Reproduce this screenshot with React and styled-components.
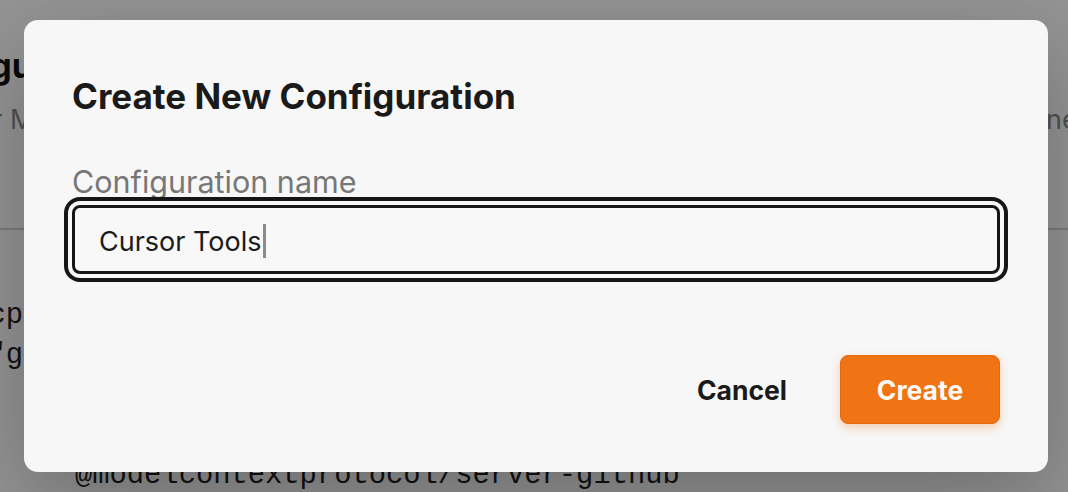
import React from "react";
import styled, { createGlobalStyle } from "styled-components";

const GlobalStyle = createGlobalStyle`
  html, body {
    margin: 0;
    padding: 0;
    width: 1068px;
    height: 492px;
    overflow: hidden;
    font-family: Inter, "Noto Sans", sans-serif;
  }
`;

const Page = styled.div`
  position: relative;
  width: 1068px;
  height: 492px;
  overflow: hidden;
  background: #ffffff;
`;

const PageBody = styled.div`
  margin-left: -100px;
  padding-top: 46px;
  width: 1300px;
`;

const PageTitle = styled.h1`
  margin: 0;
  font-size: 34px;
  line-height: 40px;
  font-weight: 700;
  color: #111;
`;

const PageSubtitle = styled.p`
  margin: 17px 0 0 16px;
  font-size: 27px;
  line-height: 34px;
  color: #8a8a8a;
  white-space: nowrap;
`;

const Divider = styled.hr`
  margin: 91px 0 0;
  border: 0;
  border-top: 2px solid #d6d6d6;
`;

const Code = styled.pre`
  margin: 66px 0 0 54px;
  font-family: "Liberation Mono", "DejaVu Sans Mono", monospace;
  font-size: 28.8px;
  line-height: 40px;
  color: #1e1e1e;
`;

const Overlay = styled.div`
  position: absolute;
  inset: 0;
  display: flex;
  align-items: center;
  justify-content: center;
  padding-left: 4px;
  background: rgba(0, 0, 0, 0.42);
`;

const Dialog = styled.div`
  width: 1024px;
  box-sizing: border-box;
  padding: 56px 48px 48px;
  background: #f7f7f7;
  border-radius: 14px;
  box-shadow: 0 30px 90px rgba(0, 0, 0, 0.25);
`;

const DialogTitle = styled.h2`
  margin: 0;
  font-size: 35px;
  line-height: 40px;
  font-weight: 700;
  color: #1a1a1a;
`;

const Field = styled.div`
  margin-top: 50px;
  display: flex;
  flex-direction: column;
  gap: 7px;
`;

const Label = styled.label`
  font-size: 30.5px;
  line-height: 32px;
  color: #777777;
`;

const Input = styled.div`
  height: 69px;
  box-sizing: border-box;
  display: flex;
  align-items: center;
  padding: 3px 24px 0;
  border: 3px solid #161616;
  border-radius: 8px;
  background: #f8f8f8;
  box-shadow: 0 0 0 4px #f7f7f7, 0 0 0 8px #161616;
  font-size: 27px;
  color: #1b1b1b;
`;

const Caret = styled.span`
  display: inline-block;
  width: 3px;
  height: 34px;
  margin-left: 1px;
  background: #8c8c8c;
`;

const Footer = styled.div`
  margin-top: 81px;
  display: flex;
  justify-content: flex-end;
  align-items: center;
  gap: 28px;
`;

const Button = styled.button`
  height: 69px;
  box-sizing: border-box;
  padding: 0 ${(p) => (p.$primary ? "35px" : "24px")};
  min-width: ${(p) => (p.$primary ? "160px" : "auto")};
  border-radius: 8px;
  border: 1px solid ${(p) => (p.$primary ? "#e26a10" : "transparent")};
  background: ${(p) => (p.$primary ? "#f07314" : "transparent")};
  color: ${(p) => (p.$primary ? "#fffaf5" : "#1a1a1a")};
  box-shadow: ${(p) =>
    p.$primary ? "0 4px 10px rgba(240, 115, 20, 0.3)" : "none"};
  font-family: Inter, "Noto Sans", sans-serif;
  font-size: 26.5px;
  font-weight: 700;
  cursor: pointer;
`;

export default function App() {
  return (
    <>
      <GlobalStyle />
      <Page>
        <PageBody>
          <PageTitle>Configurations</PageTitle>
          <PageSubtitle>
            Cursor MCP servers, grouped into named configurations you can switch between from one place with ease com
          </PageSubtitle>
          <Divider />
          <Code>{`"mcpServers": {
  "github": {
    "command": "npx",
    "args": [
      "@modelcontextprotocol/server-github"`}</Code>
        </PageBody>
        <Overlay>
          <Dialog role="dialog" aria-labelledby="dlg-title">
            <DialogTitle id="dlg-title">Create New Configuration</DialogTitle>
            <Field>
              <Label>Configuration name</Label>
              <Input>
                Cursor Tools
                <Caret />
              </Input>
            </Field>
            <Footer>
              <Button>Cancel</Button>
              <Button $primary>Create</Button>
            </Footer>
          </Dialog>
        </Overlay>
      </Page>
    </>
  );
}
